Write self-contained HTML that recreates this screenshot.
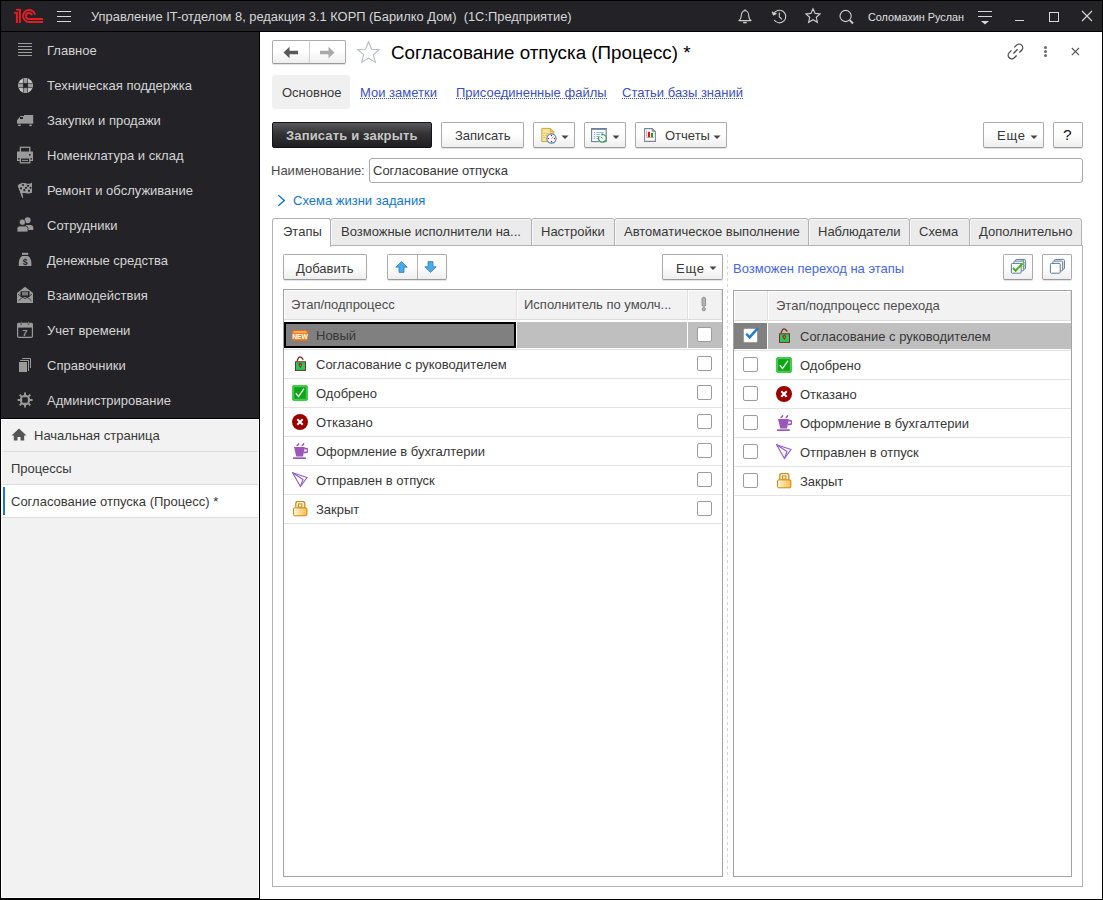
<!DOCTYPE html>
<html><head><meta charset="utf-8">
<style>
*{box-sizing:border-box}
html,body{margin:0;padding:0}
body{width:1103px;height:900px;position:relative;overflow:hidden;background:#000;font-family:"Liberation Sans",sans-serif}
.a{position:absolute}
.t{position:absolute;font-size:13px;line-height:16px;white-space:pre;color:#383838}
.topbar{left:1px;top:1px;width:1101px;height:30px;background:#232327}
.side{left:1px;top:32px;width:258px;height:386px;background:#232327}
.sidet{color:#d4d4d4}
.lp{left:1px;top:419px;width:258px;height:479px;background:#f2f2f2;border:1px solid #fff}
.main{left:260px;top:32px;width:842px;height:867px;background:#fff}
.btn{position:absolute;border:1px solid #ababab;border-bottom-color:#999;border-radius:2px;background:linear-gradient(#fff 0,#fff 45%,#eeeeee 100%);box-shadow:0 1px 1px rgba(0,0,0,.12)}
.sep{position:absolute;background:#dcdcdc;height:1px}
.lnk{color:#3c4fc4;background-image:linear-gradient(90deg,#3c4fc4 50%,transparent 50%);background-size:2px 1px;background-repeat:repeat-x;background-position:0 13px}
.tab{top:218px;height:28px;border:1px solid #b3b3b3;border-radius:3px 3px 0 0;background:#ebebeb;box-shadow:inset 1px 1px 0 #f7f7f7}
.hc{background:#f2f2f2;border-right:1px solid #e0e0e0;border-bottom:1px solid #dcdcdc;box-shadow:inset 1px 1px 0 #fff}
.cb{width:15px;height:15px;border:1px solid #9c9c9c;border-radius:2px;background:#fff}
</style></head><body>
<!-- top bar -->
<div class="a topbar"></div>
<!-- sidebar -->
<div class="a side"></div>
<div class="a lp"></div>
<div class="a main"></div>

<!-- title text -->
<div class="t" style="left:91px;top:9px;color:#d6d6d6;font-size:12.88px">Управление IT-отделом 8, редакция 3.1 КОРП (Барилко Дом)  (1С:Предприятие)</div>
<div class="t" style="left:868px;top:10px;font-size:10.8px;line-height:14px;color:#e0e0e0">Соломахин Руслан</div>

<!-- sidebar items -->
<div class="t sidet" style="left:47px;top:43px">Главное</div>
<div class="t sidet" style="left:47px;top:78px">Техническая поддержка</div>
<div class="t sidet" style="left:47px;top:113px">Закупки и продажи</div>
<div class="t sidet" style="left:47px;top:148px">Номенклатура и склад</div>
<div class="t sidet" style="left:47px;top:183px">Ремонт и обслуживание</div>
<div class="t sidet" style="left:47px;top:218px">Сотрудники</div>
<div class="t sidet" style="left:47px;top:253px">Денежные средства</div>
<div class="t sidet" style="left:47px;top:288px">Взаимодействия</div>
<div class="t sidet" style="left:47px;top:323px">Учет времени</div>
<div class="t sidet" style="left:47px;top:358px">Справочники</div>
<div class="t sidet" style="left:47px;top:393px">Администрирование</div>

<!-- left lower panel -->
<div class="sep" style="left:2px;top:451px;width:256px"></div>
<div class="a" style="left:2px;top:485px;width:256px;height:32px;background:#fff"></div>
<div class="sep" style="left:2px;top:484px;width:256px"></div>
<div class="sep" style="left:2px;top:517px;width:256px"></div>
<div class="a" style="left:3px;top:487px;width:2px;height:28px;background:#1b7bd3"></div>
<div class="t" style="left:34px;top:428px">Начальная страница</div>
<div class="t" style="left:11px;top:461px">Процессы</div>
<div class="t" style="left:11px;top:494px">Согласование отпуска (Процесс) *</div>


<!-- logo -->
<svg class="a" style="left:12px;top:6px" width="34" height="20" viewBox="0 0 34 20">
<g fill="#e31e24"><rect x="3.9" y="6" width="2" height="11"/><rect x="2" y="6" width="3.9" height="1.7"/><rect x="6.9" y="2.9" width="2" height="14.1"/><rect x="3.9" y="2.9" width="5" height="1.7"/></g>
<g fill="none" stroke="#e31e24" stroke-width="1.9"><path d="M23 8.8A6 6 0 1 0 17.1 16H31"/><path d="M19.9 9.3A3 3 0 1 0 16.95 13H31"/></g>
</svg>
<!-- hamburger -->
<div class="a" style="left:57px;top:11px;width:14px;height:1px;background:#d8d8d8"></div>
<div class="a" style="left:57px;top:16px;width:14px;height:1px;background:#d8d8d8"></div>
<div class="a" style="left:57px;top:21px;width:14px;height:1px;background:#d8d8d8"></div>
<!-- top right icons -->
<svg class="a" style="left:736px;top:7px" width="18" height="18" viewBox="0 0 18 18" fill="none" stroke="#cfcfcf" stroke-width="1.1">
<path d="M9 2.2v1.3M5.2 9.2c0-3 1.6-5.6 3.8-5.6s3.8 2.6 3.8 5.6c0 2.4 1 3.6 2.5 4.4H2.7c1.5-.8 2.5-2 2.5-4.4z"/>
<path d="M7.2 15.6h3.6" stroke-width="1.4"/>
</svg>
<svg class="a" style="left:770px;top:7px" width="18" height="18" viewBox="0 0 18 18" fill="none" stroke="#cfcfcf" stroke-width="1.1">
<path d="M3.6 7.2A6.3 6.3 0 1 1 4.2 13"/>
<path d="M2.2 4.8l1.3 3.1 3-1.5" fill="#cfcfcf"/>
<path d="M9.3 5.4v4.3l2.6 2.6"/>
</svg>
<svg class="a" style="left:804px;top:7px" width="18" height="18" viewBox="0 0 18 18" fill="none" stroke="#cfcfcf" stroke-width="1.1">
<path d="M9 1.8l2.1 4.6 5 .5-3.8 3.4 1.1 5-4.4-2.6-4.4 2.6 1.1-5L1.9 6.9l5-.5z"/>
</svg>
<svg class="a" style="left:838px;top:8px" width="18" height="18" viewBox="0 0 18 18" fill="none" stroke="#cfcfcf" stroke-width="1.1">
<circle cx="7.6" cy="8" r="5.6"/>
<path d="M11.7 12.2l3.3 3.3" stroke-width="1.9"/>
</svg>
<!-- filter icon -->
<div class="a" style="left:978px;top:11px;width:14px;height:1px;background:#d8d8d8"></div>
<div class="a" style="left:978px;top:16px;width:14px;height:1px;background:#d8d8d8"></div>
<svg class="a" style="left:981px;top:21px" width="8" height="4" viewBox="0 0 8 4"><path d="M0 0h8L4 3.5z" fill="#d8d8d8"/></svg>
<!-- window controls -->
<div class="a" style="left:1015px;top:20px;width:9px;height:1px;background:#d8d8d8"></div>
<div class="a" style="left:1049px;top:12px;width:10px;height:10px;border:1px solid #d8d8d8"></div>
<svg class="a" style="left:1081px;top:10px" width="12" height="12" viewBox="0 0 12 12" stroke="#d8d8d8" stroke-width="1.1"><path d="M1 1l10 10M11 1L1 11"/></svg>

<!-- sidebar icons -->
<svg class="a" style="left:18px;top:43px" width="15" height="13" viewBox="0 0 15 13" fill="#9c9c9c">
<rect x="0" y="0" width="14" height="1"/><rect x="0" y="3" width="14" height="1"/><rect x="0" y="6" width="14" height="1"/><rect x="0" y="9" width="14" height="1"/><rect x="0" y="12" width="14" height="1"/>
</svg>
<svg class="a" style="left:14px;top:74px" width="24" height="24" viewBox="0 0 24 24">
<defs><clipPath id="lb"><circle cx="11.5" cy="11.5" r="7.5"/></clipPath></defs>
<g clip-path="url(#lb)">
<rect x="3" y="3" width="18" height="18" fill="#c9c9c9"/>
<rect x="9.8" y="3" width="3.4" height="18" fill="#9c9c9c"/>
<rect x="3" y="9.8" width="18" height="3.4" fill="#9c9c9c"/>
<path d="M9.4 3v17M13.6 3v17M3 9.4h17M3 13.6h17" stroke="#232327" stroke-width="0.7"/>
<rect x="9.4" y="9.4" width="4.2" height="4.2" fill="#232327"/>
</g>
</svg>
<svg class="a" style="left:14px;top:109px" width="24" height="24" viewBox="0 0 24 24" fill="#9a9a9a">
<path d="M10 6h9.2v8.8H3v-3.6L6.6 7H10z"/>
<rect x="6" y="8" width="3" height="2" fill="#232327"/>
<circle cx="5.5" cy="15.8" r="1.5"/><circle cx="16.5" cy="15.8" r="1.5"/>
<rect x="3" y="14.8" width="16.2" height="0.8" fill="#232327"/>
</svg>
<svg class="a" style="left:14px;top:144px" width="24" height="24" viewBox="0 0 24 24">
<rect x="6.4" y="3.3" width="9.4" height="5.5" fill="none" stroke="#9a9a9a" stroke-width="1.3"/>
<rect x="3" y="7.5" width="16" height="9.5" fill="#9a9a9a"/>
<rect x="15" y="10" width="1.6" height="1.6" fill="#232327"/>
<rect x="4.2" y="14" width="1.7" height="1.7" fill="#232327"/>
<rect x="16.1" y="14" width="1.7" height="1.7" fill="#232327"/>
<rect x="6.4" y="13.9" width="9.4" height="4.9" fill="#232327" stroke="#9a9a9a" stroke-width="1.3"/>
<rect x="8" y="15.9" width="6" height="1" fill="#9a9a9a"/>
</svg>
<svg class="a" style="left:14px;top:179px" width="24" height="24" viewBox="0 0 24 24">
<path d="M4 6.2C7 3.5 10 4 12.5 4.5s4 .3 5.5-.9V13.8c-2 .8-4 .7-6 .4s-3.7-.3-3.6.3L8.8 18.5 8.5 19" fill="#9a9a9a"/>
<path d="M4.2 6.2l4.6 12.5" stroke="#9a9a9a" stroke-width="1.2"/>
<g fill="#232327"><circle cx="9" cy="6" r="1.1"/><circle cx="14" cy="6.8" r="1.1"/><circle cx="7" cy="9.3" r="1.1"/><circle cx="12" cy="8.8" r="1.1"/><circle cx="16.5" cy="8.8" r="1"/><circle cx="10.3" cy="11.2" r="1.1"/><circle cx="15" cy="11.8" r="1.1"/></g>
</svg>
<svg class="a" style="left:14px;top:214px" width="24" height="24" viewBox="0 0 24 24" fill="#9a9a9a">
<circle cx="13.6" cy="6.2" r="3"/><path d="M11.5 11h5.4a2.6 2.6 0 0 1 2.4 2.4V16H14z"/>
<circle cx="8.4" cy="8.2" r="3.1" stroke="#232327" stroke-width="0.8"/>
<path d="M3 14.5a2.5 2.5 0 0 1 2.5-2.5h6a2.5 2.5 0 0 1 2.5 2.5V18H3z" stroke="#232327" stroke-width="0.8"/>
</svg>
<svg class="a" style="left:14px;top:249px" width="24" height="24" viewBox="0 0 24 24" fill="#9a9a9a">
<rect x="8" y="3.8" width="6.2" height="2.1"/>
<path d="M8 7h6.2c1.8 1.2 3.2 4 3.2 6.8V17H4.8v-3.2C4.8 11 6.2 8.2 8 7z"/>
<text x="11.1" y="15.6" font-size="8.6" font-family="Liberation Sans" font-weight="bold" text-anchor="middle" fill="#232327">$</text>
</svg>
<svg class="a" style="left:14px;top:284px" width="24" height="24" viewBox="0 0 24 24">
<path d="M3 9L11 2.8 19 9V19H3z" fill="#9a9a9a"/>
<rect x="6.5" y="7.3" width="9" height="5.8" fill="#232327"/>
<rect x="8" y="8" width="6" height="3.5" fill="#777"/>
<path d="M4.6 16.6L9.4 12.6M17.4 16.6L12.6 12.6M4 10.2l7 4.5 7-4.5" stroke="#232327" stroke-width="0.8" fill="none"/>
</svg>
<svg class="a" style="left:14px;top:319px" width="24" height="24" viewBox="0 0 24 24">
<rect x="3.6" y="4.4" width="14.8" height="14" rx="1.2" fill="none" stroke="#9a9a9a" stroke-width="1.2"/>
<rect x="3.6" y="4.4" width="14.8" height="4.2" fill="#9a9a9a"/>
<path d="M7.3 3v3M14.5 3v3" stroke="#232327" stroke-width="1.3"/>
<path d="M7.3 2.8v3M14.5 2.8v3" stroke="#9a9a9a" stroke-width="0.7"/>
<text x="11" y="16.8" font-size="9.5" font-family="Liberation Sans" font-weight="bold" text-anchor="middle" fill="#9a9a9a">7</text>
</svg>
<svg class="a" style="left:14px;top:354px" width="24" height="24" viewBox="0 0 24 24">
<rect x="5" y="8" width="8" height="10" fill="#9a9a9a"/>
<path d="M6.2 6.5h8.3v10.5" fill="none" stroke="#9a9a9a" stroke-width="1"/>
<path d="M8.2 4.5h8.3v9.5" fill="none" stroke="#9a9a9a" stroke-width="1"/>
</svg>
<svg class="a" style="left:14px;top:389px" width="24" height="24" viewBox="0 0 24 24">
<g stroke="#9a9a9a" stroke-width="1.9"><path d="M11 3.6v15M3.6 11h15M5.7 5.7l10.6 10.6M16.3 5.7L5.7 16.3"/></g>
<circle cx="11" cy="11" r="4.2" fill="none" stroke="#9a9a9a" stroke-width="2"/>
<rect x="8.2" y="8.2" width="5.6" height="5.6" rx="1.2" fill="#232327"/>
</svg>
<!-- home icon -->
<svg class="a" style="left:11px;top:428px" width="17" height="13" viewBox="0 0 17 13" fill="#555"><path d="M8 0.5L0.5 7.5h2.3V12.5h3.7V9h3v3.5h3.7V7.5h2.3z"/></svg>

<!-- main header -->
<div class="t" style="left:391px;top:42px;font-size:18.8px;line-height:22px;color:#000">Согласование отпуска (Процесс) *</div>


<!-- nav group -->
<div class="btn" style="left:272px;top:40px;width:74px;height:24px"></div>
<div class="a" style="left:309px;top:41px;width:1px;height:22px;background:#d0d0d0"></div>
<svg class="a" style="left:283px;top:46px" width="16" height="13" viewBox="0 0 16 13"><path d="M0.5 6.5L6.5 0.8V4.8H15V8.2H6.5V12.2z" fill="#595959"/></svg>
<svg class="a" style="left:319px;top:46px" width="16" height="13" viewBox="0 0 16 13"><path d="M15.5 6.5L9.5 0.8V4.8H1V8.2H9.5V12.2z" fill="#a9a9a9"/></svg>
<!-- star -->
<svg class="a" style="left:356px;top:40px" width="25" height="24" viewBox="0 0 25 24"><path d="M12.5 1.8l3 7.4 7.8.5-6 5 2 7.7-6.8-4.3-6.8 4.3 2-7.7-6-5 7.8-.5z" fill="none" stroke="#b4bcc6" stroke-width="1.1"/></svg>
<!-- right header icons -->
<svg class="a" style="left:1004px;top:40px" width="24" height="24" viewBox="0 0 24 24" fill="none" stroke="#4a4a4a" stroke-width="1.3">
<path d="M10.3 7.4L12.55 5.15A3.6 3.6 0 0 1 17.65 10.25L15.4 12.5"/><path d="M7.5 10.4L5.25 12.65A3.6 3.6 0 0 0 10.35 17.75L12.6 15.5"/><path d="M9.4 13.5L13.6 9.3"/>
</svg>
<div class="a" style="left:1044px;top:45.5px;width:3.2px;height:3.2px;border-radius:2px;background:#6a6a6a"></div>
<div class="a" style="left:1044px;top:49.8px;width:3.2px;height:3.2px;border-radius:2px;background:#6a6a6a"></div>
<div class="a" style="left:1044px;top:54px;width:3.2px;height:3.2px;border-radius:2px;background:#6a6a6a"></div>
<svg class="a" style="left:1070px;top:46px" width="11" height="11" viewBox="0 0 11 11" stroke="#555" stroke-width="1.1"><path d="M1.8 2l7.2 7.2M9 2L1.8 9.2"/></svg>

<!-- form tabs -->
<div class="a" style="left:272px;top:75px;width:78px;height:34px;background:#f0f0f0;border-radius:3px"></div>
<div class="t" style="left:282px;top:85px">Основное</div>
<div class="t lnk" style="left:360px;top:85px">Мои заметки</div>
<div class="t lnk" style="left:456px;top:85px">Присоединенные файлы</div>
<div class="t lnk" style="left:622px;top:85px">Статьи базы знаний</div>

<!-- command bar -->
<div class="a" style="left:272px;top:122px;width:160px;height:26px;border:1px solid #151515;border-radius:2px;background:linear-gradient(#5a5a5c,#323234 45%,#1f1f22)"></div>
<div class="t" style="left:286px;top:128px;font-weight:bold;color:#c6c6c6;letter-spacing:0.15px">Записать и закрыть</div>
<div class="btn" style="left:441px;top:122px;width:83px;height:26px"></div>
<div class="t" style="left:455px;top:128px">Записать</div>
<div class="btn" style="left:533px;top:122px;width:42px;height:26px"></div>
<div class="btn" style="left:584px;top:122px;width:42px;height:26px"></div>
<div class="btn" style="left:635px;top:122px;width:92px;height:26px"></div>
<div class="t" style="left:665px;top:128px">Отчеты</div>
<div class="btn" style="left:983px;top:122px;width:61px;height:26px"></div>
<div class="t" style="left:997px;top:128px;letter-spacing:0.8px">Еще</div>
<div class="btn" style="left:1053px;top:122px;width:30px;height:26px"></div>
<div class="t" style="left:1063px;top:127px;font-size:15.5px;line-height:16px;color:#111">?</div>
<svg class="a" style="left:561px;top:135px" width="8" height="4"><path d="M0.5 0.5h7L4 4z" fill="#444"/></svg>
<svg class="a" style="left:612px;top:135px" width="8" height="4"><path d="M0.5 0.5h7L4 4z" fill="#444"/></svg>
<svg class="a" style="left:713px;top:135px" width="8" height="4"><path d="M0.5 0.5h7L4 4z" fill="#444"/></svg>
<svg class="a" style="left:1030px;top:135px" width="8" height="4"><path d="M0.5 0.5h7L4 4z" fill="#444"/></svg>
<!-- cmd icons -->
<svg class="a" style="left:538px;top:124px" width="24" height="24" viewBox="0 0 24 24">
<path d="M3.8 4.4h8.7l3.3 3.3V17.6H3.8z" fill="#f7e39c" stroke="#cfa73a" stroke-width="1"/>
<path d="M12.3 4.5v3.3h3.3" fill="#f2d77a" stroke="#cfa73a" stroke-width="1"/>
<path d="M5.4 9.4h1.6M8.2 9.4h2.4M5.4 11.5h.6M7.2 11.5h2M5.4 13.5h2.2" stroke="#d9b860" stroke-width="0.9"/>
<circle cx="13.5" cy="14.5" r="4.6" fill="#fff" stroke="#4f82b8" stroke-width="1.1"/>
<g fill="#e00"><circle cx="13.5" cy="11.5" r=".7"/><circle cx="13.5" cy="17.5" r=".7"/><circle cx="10.5" cy="14.5" r=".7"/><circle cx="16.5" cy="14.5" r=".7"/></g>
<path d="M13.5 14.5l1.8-2" stroke="#6f97d0" stroke-width="0.9"/>
</svg>
<svg class="a" style="left:587px;top:124px" width="24" height="24" viewBox="0 0 24 24">
<rect x="4.6" y="4.6" width="14.6" height="13" fill="#fff" stroke="#66819e" stroke-width="1.1"/>
<rect x="4.2" y="4.2" width="15.4" height="1.6" fill="#66819e"/>
<g fill="#7fb0ec"><circle cx="7.5" cy="8.5" r=".7"/><circle cx="7.5" cy="10.5" r=".7"/><circle cx="7.5" cy="12.5" r=".7"/><circle cx="7.5" cy="14.5" r=".7"/></g>
<path d="M9.2 8.5h7.6M9.2 10.5h3.8M9.2 12.5h2M9.2 14.5h2" stroke="#7fb0ec" stroke-width="0.9"/>
<circle cx="15.4" cy="14.2" r="4.2" fill="#fff"/>
<path d="M15.2 10.3A3.9 3.9 0 1 1 12.2 12" fill="none" stroke="#3e9a57" stroke-width="1.3"/>
<path d="M15 9.6v2" stroke="#3e9a57" stroke-width="1.4"/>
<path d="M14 12.8l1.6 1.6" stroke="#556" stroke-width="1"/>
</svg>
<svg class="a" style="left:638px;top:122px" width="24" height="24" viewBox="0 0 24 24">
<path d="M6.6 6.6h7.6l3.2 3.2v9.6H6.6z" fill="#fff" stroke="#7a8794" stroke-width="1.1"/>
<path d="M14.2 6.7v2.5h3" fill="#aab" stroke="#7a8794" stroke-width="1"/>
<rect x="9.9" y="9.8" width="2.1" height="5.5" fill="#e8130c"/>
<rect x="12.9" y="11" width="2.1" height="4.3" fill="#16a21a"/>
<path d="M8.6 8.3v7.3h7.3" fill="none" stroke="#88a" stroke-width="0.6"/>
</svg>

<!-- name field -->
<div class="t" style="left:271px;top:163px;color:#4a4a4a">Наименование:</div>
<div class="a" style="left:369px;top:158px;width:714px;height:25px;border:1px solid #a9a9a9;border-radius:3px;background:#fff"></div>
<div class="t" style="left:373px;top:163px">Согласование отпуска</div>
<!-- schema link -->
<svg class="a" style="left:276px;top:193px" width="10" height="14" viewBox="0 0 10 14"><path d="M2.4 2.3L8.3 7.4 2.4 12.7" fill="none" stroke="#0b76d4" stroke-width="1.4"/></svg>
<div class="t" style="left:293px;top:193px;color:#0f76d2">Схема жизни задания</div>

<!-- tabs -->
<div class="a tab" style="left:330px;width:202px"></div>
<div class="a tab" style="left:531px;width:84px"></div>
<div class="a tab" style="left:614px;width:195px"></div>
<div class="a tab" style="left:808px;width:102px"></div>
<div class="a tab" style="left:909px;width:61px"></div>
<div class="a tab" style="left:969px;width:113px"></div>
<div class="a" style="left:272px;top:245px;width:811px;height:642px;border:1px solid #b3b3b3;background:#fff"></div>
<div class="a" style="left:272px;top:218px;width:59px;height:29px;border:1px solid #b3b3b3;border-bottom:none;border-radius:3px 3px 0 0;background:#fff"></div>
<div class="t" style="left:283px;top:224px">Этапы</div>
<div class="t" style="left:341px;top:224px">Возможные исполнители на...</div>
<div class="t" style="left:541px;top:224px">Настройки</div>
<div class="t" style="left:624px;top:224px">Автоматическое выполнение</div>
<div class="t" style="left:818px;top:224px">Наблюдатели</div>
<div class="t" style="left:919px;top:224px">Схема</div>
<div class="t" style="left:979px;top:224px">Дополнительно</div>

<div class="btn" style="left:283px;top:254px;width:84px;height:26px"></div>
<div class="t" style="left:296px;top:261px">Добавить</div>
<div class="btn" style="left:387px;top:254px;width:60px;height:26px"></div>
<div class="a" style="left:417px;top:255px;width:1px;height:24px;background:#b4b4b4"></div>
<svg class="a" style="left:395px;top:261px" width="13" height="12" viewBox="0 0 13 12"><path d="M6.5 0.6L12.2 6.2H9V11.4H4V6.2H0.8z" fill="#48ace9" stroke="#2b7fc0" stroke-width="0.8"/></svg>
<svg class="a" style="left:424px;top:261px" width="13" height="12" viewBox="0 0 13 12"><path d="M6.5 11.4L12.2 5.8H9V0.6H4V5.8H0.8z" fill="#48ace9" stroke="#2b7fc0" stroke-width="0.8"/></svg>
<div class="btn" style="left:662px;top:254px;width:61px;height:26px"></div>
<div class="t" style="left:676px;top:261px;letter-spacing:0.8px">Еще</div>
<svg class="a" style="left:709px;top:266px" width="8" height="4"><path d="M0.5 0.5h7L4 4z" fill="#444"/></svg>
<div class="a" style="left:727px;top:254px;width:1px;height:622px;background-image:linear-gradient(#d6d6d6 50%,transparent 50%);background-size:1px 6px"></div>
<div class="t" style="left:733px;top:261px;color:#4466ee">Возможен переход на этапы</div>
<div class="btn" style="left:1003px;top:254px;width:30px;height:26px"></div>
<div class="btn" style="left:1042px;top:254px;width:30px;height:26px"></div>
<svg class="a" style="left:1010px;top:258px" width="17" height="17" viewBox="0 0 17 17">
<rect x="5.6" y="1.4" width="9.8" height="9.8" rx="1" fill="#fff" stroke="#5a7a98" stroke-width="1"/>
<rect x="3.9" y="3.1" width="9.8" height="9.8" rx="1" fill="#fff" stroke="#5a7a98" stroke-width="1"/>
<rect x="1.4" y="5.4" width="9.8" height="9.8" rx="1" fill="#fff" stroke="#5a7a98" stroke-width="1"/>
<path d="M12.5 3.5l1.5-1.5M12.5 6l1.8-2M12.8 9l1.6-2" stroke="#5fc03a" stroke-width="1.2"/>
<path d="M3 10l2.6 2.8 6.8-7.3" fill="none" stroke="#43b21a" stroke-width="2"/>
</svg>
<svg class="a" style="left:1049px;top:258px" width="17" height="17" viewBox="0 0 17 17">
<rect x="5.6" y="1.4" width="9.8" height="9.8" rx="1" fill="#fff" stroke="#5a7a98" stroke-width="1"/>
<rect x="3.9" y="3.1" width="9.8" height="9.8" rx="1" fill="#fff" stroke="#5a7a98" stroke-width="1"/>
<rect x="1.4" y="5.4" width="9.8" height="9.8" rx="1" fill="#fff" stroke="#5a7a98" stroke-width="1"/>
</svg>
<div class="a" style="left:283px;top:289px;width:440px;height:588px;border:1px solid #a3a3a3;background:#fff"></div>
<div class="a hc" style="left:284px;top:290px;width:233px;height:30px"></div>
<div class="a hc" style="left:517px;top:290px;width:171px;height:30px"></div>
<div class="a hc" style="left:688px;top:290px;width:34px;height:30px"></div>
<div class="t" style="left:291px;top:297px;color:#4d4d4d">Этап/подпроцесс</div>
<div class="t" style="left:524px;top:297px;color:#4d4d4d">Исполнитель по умолч...</div>
<svg class="a" style="left:700px;top:296px" width="8" height="16" viewBox="0 0 8 16"><rect x="2" y="1.2" width="3.6" height="9.3" rx="1.8" fill="#b4b4b4" stroke="#8a8a8a" stroke-width="0.9"/><circle cx="3.8" cy="13.2" r="1.6" fill="#b4b4b4" stroke="#8a8a8a" stroke-width="0.9"/></svg>
<div class="a" style="left:284px;top:322px;width:232px;height:26px;border:2px solid #000;background:#808080"></div>
<div class="a" style="left:517px;top:322px;width:170px;height:26px;background:#bfbfbf"></div>
<div class="a" style="left:688px;top:322px;width:34px;height:26px;background:#bfbfbf"></div>
<svg class="a" style="left:292px;top:330px" width="16" height="12" viewBox="0 0 16 12"><rect x="0.5" y="0.5" width="15" height="10" rx="1.5" fill="#f08228" stroke="#e07418" stroke-width="1"/><rect x="1.5" y="1.5" width="13" height="1" fill="#fbd0a8"/><text x="8" y="8.8" font-size="6.8" font-family="Liberation Sans" font-weight="bold" text-anchor="middle" fill="#fff" letter-spacing="-0.2">NEW</text></svg>
<div class="t" style="left:316px;top:328px">Новый</div>
<div class="a cb" style="left:697px;top:327px"></div>
<div class="a" style="left:284px;top:349px;width:438px;height:1px;background:#e3e3e3"></div>
<svg class="a" style="left:292px;top:356px" width="16" height="16" viewBox="0 0 16 16"><path d="M5.3 5.6V4.2Q6.5 0.6 8.2 0.8 9.6 0.9 11.3 3.6" fill="none" stroke="#6e2a20" stroke-width="1.2"/><rect x="3.5" y="5.8" width="10" height="8.6" fill="#22cc55" stroke="#7a2b2b" stroke-width="1"/><path d="M6.6 9.2a1.8 1.8 0 1 1 3.4 0L8.3 12.3z" fill="#a02c2c"/><circle cx="8.3" cy="9" r=".5" fill="#cfe0a0"/></svg>
<div class="t" style="left:316px;top:357px">Согласование с руководителем</div>
<div class="a cb" style="left:697px;top:356px"></div>
<div class="a" style="left:284px;top:378px;width:438px;height:1px;background:#e3e3e3"></div>
<svg class="a" style="left:292px;top:385px" width="16" height="16" viewBox="0 0 16 16"><rect x="0.5" y="0.5" width="15" height="15" rx="1.5" fill="#0aa615" stroke="#3fcf48"/><rect x="1.8" y="1.8" width="12.4" height="12.4" fill="none" stroke="#8fe294" stroke-width="0.6"/><path d="M3.8 8.2l2.7 3.5 5.5-8" fill="none" stroke="#f4e8f4" stroke-width="1.3"/></svg>
<div class="t" style="left:316px;top:386px">Одобрено</div>
<div class="a cb" style="left:697px;top:385px"></div>
<div class="a" style="left:284px;top:407px;width:438px;height:1px;background:#e3e3e3"></div>
<svg class="a" style="left:292px;top:414px" width="16" height="16" viewBox="0 0 16 16"><circle cx="8" cy="8" r="8" fill="#9b0000"/><path d="M5.3 5.3l5.4 5.4M10.7 5.3l-5.4 5.4" stroke="#fff" stroke-width="2"/></svg>
<div class="t" style="left:316px;top:415px">Отказано</div>
<div class="a cb" style="left:697px;top:414px"></div>
<div class="a" style="left:284px;top:436px;width:438px;height:1px;background:#e3e3e3"></div>
<svg class="a" style="left:292px;top:443px" width="16" height="16" viewBox="0 0 16 16"><path d="M2 4H12.8L11 13.6H4.3z" fill="#9a56b8"/><path d="M12.3 5.6h1.6a1.9 1.9 0 0 1 0 3.8h-2" fill="none" stroke="#9a56b8" stroke-width="1.6"/><rect x="1.1" y="14.3" width="12.7" height="1.7" fill="#9a56b8"/><path d="M6.6 0.2Q6.9 1.8 4.6 2.8M11.6 0.2Q11.9 1.8 9.6 2.8" fill="none" stroke="#9a56b8" stroke-width="1.5"/></svg>
<div class="t" style="left:316px;top:444px">Оформление в бухгалтерии</div>
<div class="a cb" style="left:697px;top:443px"></div>
<div class="a" style="left:284px;top:465px;width:438px;height:1px;background:#e3e3e3"></div>
<svg class="a" style="left:292px;top:472px" width="16" height="16" viewBox="0 0 16 16"><path d="M0.6 0.8L15 5.6 8.4 14.5z" fill="none" stroke="#8e5bd0" stroke-width="1.1"/><path d="M0.6 0.8L11 7.5 8.4 14.5" fill="none" stroke="#8e5bd0" stroke-width="1.1"/></svg>
<div class="t" style="left:316px;top:473px">Отправлен в отпуск</div>
<div class="a cb" style="left:697px;top:472px"></div>
<div class="a" style="left:284px;top:494px;width:438px;height:1px;background:#e3e3e3"></div>
<svg class="a" style="left:292px;top:501px" width="16" height="16" viewBox="0 0 16 16"><defs><linearGradient id="lg" x1="0" x2="1"><stop offset="0" stop-color="#fff3cf"/><stop offset="1" stop-color="#f7ac1c"/></linearGradient></defs><path d="M3.8 6.8V2.6Q3.8 0.4 6 0.4H10.6Q12.8 0.4 12.8 2.6V6.8" fill="#fff6dc" stroke="#d08a16" stroke-width="1.3"/><rect x="6.5" y="2.9" width="3.4" height="3.2" fill="#fff" stroke="#d08a16" stroke-width="1.1"/><rect x="1.5" y="6.8" width="13.4" height="8" rx="1.2" fill="url(#lg)" stroke="#d08a16" stroke-width="1"/><path d="M2.5 8.8h11.4M2.5 10.8h11.4M2.5 12.8h11.4" stroke="#fff" stroke-opacity="0.55" stroke-width="0.8"/></svg>
<div class="t" style="left:316px;top:502px">Закрыт</div>
<div class="a cb" style="left:697px;top:501px"></div>
<div class="a" style="left:284px;top:523px;width:438px;height:1px;background:#e3e3e3"></div>
<div class="a" style="left:733px;top:290px;width:339px;height:587px;border:1px solid #a3a3a3;background:#fff"></div>
<div class="a hc" style="left:734px;top:291px;width:34px;height:30px"></div>
<div class="a hc" style="left:768px;top:291px;width:303px;height:30px"></div>
<div class="t" style="left:776px;top:298px;color:#4d4d4d">Этап/подпроцесс перехода</div>
<div class="a" style="left:734px;top:323px;width:33px;height:26px;background:#808080"></div>
<div class="a" style="left:768px;top:323px;width:303px;height:26px;background:#bfbfbf"></div>
<div class="a" style="left:734px;top:350px;width:337px;height:1px;background:#e3e3e3"></div>
<svg class="a" style="left:776px;top:328px" width="16" height="16" viewBox="0 0 16 16"><path d="M5.3 5.6V4.2Q6.5 0.6 8.2 0.8 9.6 0.9 11.3 3.6" fill="none" stroke="#6e2a20" stroke-width="1.2"/><rect x="3.5" y="5.8" width="10" height="8.6" fill="#22cc55" stroke="#7a2b2b" stroke-width="1"/><path d="M6.6 9.2a1.8 1.8 0 1 1 3.4 0L8.3 12.3z" fill="#a02c2c"/><circle cx="8.3" cy="9" r=".5" fill="#cfe0a0"/></svg>
<div class="t" style="left:800px;top:329px">Согласование с руководителем</div>
<div class="a cb" style="left:743px;top:328px"></div>
<div class="a" style="left:734px;top:379px;width:337px;height:1px;background:#e3e3e3"></div>
<svg class="a" style="left:776px;top:357px" width="16" height="16" viewBox="0 0 16 16"><rect x="0.5" y="0.5" width="15" height="15" rx="1.5" fill="#0aa615" stroke="#3fcf48"/><rect x="1.8" y="1.8" width="12.4" height="12.4" fill="none" stroke="#8fe294" stroke-width="0.6"/><path d="M3.8 8.2l2.7 3.5 5.5-8" fill="none" stroke="#f4e8f4" stroke-width="1.3"/></svg>
<div class="t" style="left:800px;top:358px">Одобрено</div>
<div class="a cb" style="left:743px;top:357px"></div>
<div class="a" style="left:734px;top:408px;width:337px;height:1px;background:#e3e3e3"></div>
<svg class="a" style="left:776px;top:386px" width="16" height="16" viewBox="0 0 16 16"><circle cx="8" cy="8" r="8" fill="#9b0000"/><path d="M5.3 5.3l5.4 5.4M10.7 5.3l-5.4 5.4" stroke="#fff" stroke-width="2"/></svg>
<div class="t" style="left:800px;top:387px">Отказано</div>
<div class="a cb" style="left:743px;top:386px"></div>
<div class="a" style="left:734px;top:437px;width:337px;height:1px;background:#e3e3e3"></div>
<svg class="a" style="left:776px;top:415px" width="16" height="16" viewBox="0 0 16 16"><path d="M2 4H12.8L11 13.6H4.3z" fill="#9a56b8"/><path d="M12.3 5.6h1.6a1.9 1.9 0 0 1 0 3.8h-2" fill="none" stroke="#9a56b8" stroke-width="1.6"/><rect x="1.1" y="14.3" width="12.7" height="1.7" fill="#9a56b8"/><path d="M6.6 0.2Q6.9 1.8 4.6 2.8M11.6 0.2Q11.9 1.8 9.6 2.8" fill="none" stroke="#9a56b8" stroke-width="1.5"/></svg>
<div class="t" style="left:800px;top:416px">Оформление в бухгалтерии</div>
<div class="a cb" style="left:743px;top:415px"></div>
<div class="a" style="left:734px;top:466px;width:337px;height:1px;background:#e3e3e3"></div>
<svg class="a" style="left:776px;top:444px" width="16" height="16" viewBox="0 0 16 16"><path d="M0.6 0.8L15 5.6 8.4 14.5z" fill="none" stroke="#8e5bd0" stroke-width="1.1"/><path d="M0.6 0.8L11 7.5 8.4 14.5" fill="none" stroke="#8e5bd0" stroke-width="1.1"/></svg>
<div class="t" style="left:800px;top:445px">Отправлен в отпуск</div>
<div class="a cb" style="left:743px;top:444px"></div>
<div class="a" style="left:734px;top:495px;width:337px;height:1px;background:#e3e3e3"></div>
<svg class="a" style="left:776px;top:473px" width="16" height="16" viewBox="0 0 16 16"><defs><linearGradient id="lg" x1="0" x2="1"><stop offset="0" stop-color="#fff3cf"/><stop offset="1" stop-color="#f7ac1c"/></linearGradient></defs><path d="M3.8 6.8V2.6Q3.8 0.4 6 0.4H10.6Q12.8 0.4 12.8 2.6V6.8" fill="#fff6dc" stroke="#d08a16" stroke-width="1.3"/><rect x="6.5" y="2.9" width="3.4" height="3.2" fill="#fff" stroke="#d08a16" stroke-width="1.1"/><rect x="1.5" y="6.8" width="13.4" height="8" rx="1.2" fill="url(#lg)" stroke="#d08a16" stroke-width="1"/><path d="M2.5 8.8h11.4M2.5 10.8h11.4M2.5 12.8h11.4" stroke="#fff" stroke-opacity="0.55" stroke-width="0.8"/></svg>
<div class="t" style="left:800px;top:474px">Закрыт</div>
<div class="a cb" style="left:743px;top:473px"></div>
<svg class="a" style="left:744px;top:325px" width="16" height="16" viewBox="0 0 16 16"><path d="M2.2 8.8l3.4 3.6L14 3" fill="none" stroke="#1a7ad8" stroke-width="2.4"/></svg>
</body></html>
